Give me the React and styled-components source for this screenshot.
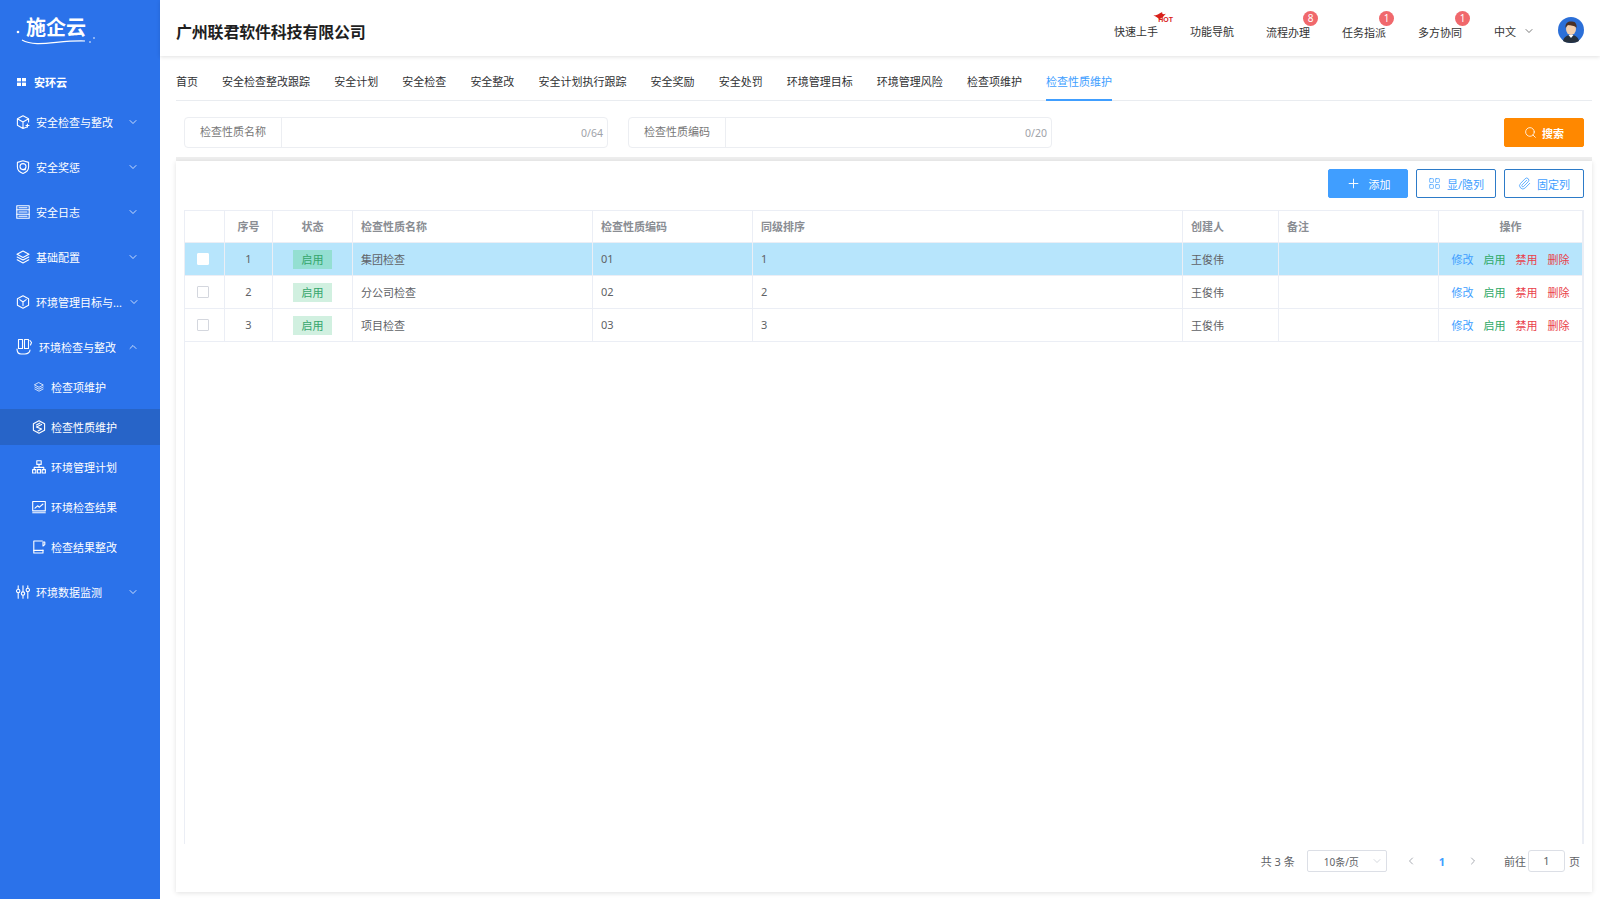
import React from 'react';
import styled, { createGlobalStyle } from 'styled-components';
import { ChevronDown, ChevronUp, ChevronLeft, ChevronRight, Search, Plus, LayoutGrid, Paperclip } from 'lucide-react';

const GlobalStyle = createGlobalStyle`
  * { box-sizing: border-box; }
  html, body { margin: 0; padding: 0; height: 100%; }
  body {
    font-family: "Noto Sans", "Noto Sans CJK SC", sans-serif;
    font-size: 12px;
    color: #606266;
    background: #fff;
    overflow: hidden;
  }
`;

const Page = styled.div`
  display: flex;
  width: 1600px;
  height: 899px;
`;

const Sidebar = styled.aside`
  width: 160px;
  flex-shrink: 0;
  background: #2b72ea;
  color: #fff;
  display: flex;
  flex-direction: column;
`;

const LogoBox = styled.div`
  height: 64px;
  flex-shrink: 0;
  position: relative;
  padding: 14px 0 0 26px;
`;

const LogoText = styled.div`
  font-size: 20px;
  line-height: 25px;
  font-weight: 700;
  font-family: "Noto Sans CJK SC", sans-serif;
`;

const Swoosh = styled.svg`
  position: absolute;
  left: 14px;
  top: 24px;
  width: 84px;
  height: 24px;
`;

const MenuHome = styled.div`
  height: 35px;
  flex-shrink: 0;
  display: flex;
  align-items: center;
  gap: 8px;
  padding-left: 17px;
  font-size: 11px;
  font-weight: 700;
`;

const MenuRow = styled.div`
  height: 45px;
  flex-shrink: 0;
  display: flex;
  align-items: center;
  padding: 0 21px 0 16px;
  gap: 6px;
  font-size: 11px;
  white-space: nowrap;
`;

const MenuArrow = styled.span`
  display: flex;
  margin-left: auto;
`;

const SubMenu = styled.div`
  margin: -2px 0 2px;
`;

const SubRow = styled.div`
  height: ${p => (p.$active ? '36px' : '40px')};
  margin: ${p => (p.$active ? '2px 0' : '0')};
  display: flex;
  align-items: center;
  gap: 5px;
  padding-left: 31px;
  font-size: 11px;
  background: ${p => (p.$active ? '#2764c8' : 'transparent')};
`;

const SubIcon = styled.span`
  width: 15px;
  display: flex;
  justify-content: center;
`;

const Main = styled.div`
  flex: 1;
  min-width: 0;
  display: flex;
  flex-direction: column;
`;

const Header = styled.header`
  height: 56px;
  flex-shrink: 0;
  display: flex;
  align-items: center;
  padding: 6px 16px 0 16px;
  box-shadow: 0 1px 4px rgba(0, 0, 0, 0.12);
  position: relative;
`;

const Company = styled.div`
  font-size: 16px;
  font-weight: 700;
  color: #1f1f1f;
  letter-spacing: -0.2px;
  margin-right: auto;
`;

const NavItem = styled.div`
  width: 76px;
  text-align: center;
  font-size: 11px;
  color: #333;
  position: relative;
  padding-top: ${p => (p.$low ? '2px' : '0')};
`;

const Badge = styled.span`
  position: absolute;
  top: -11px;
  left: 53px;
  width: 15px;
  height: 15px;
  border-radius: 50%;
  background: #f0686c;
  color: #fff;
  font-size: 10px;
  line-height: 15px;
  text-align: center;
`;

const HotMark = styled.span`
  position: absolute;
  top: -10px;
  left: 55px;
  width: 20px;
  height: 10px;
  color: #d8201a;
  font-family: "Liberation Sans", sans-serif;
  font-size: 7px;
  font-weight: 700;
  line-height: 6px;
  display: flex;
  align-items: flex-end;
  justify-content: flex-end;
`;

const Flame = styled.svg`
  position: absolute;
  top: -1px;
  left: 0;
  width: 15px;
  height: 9px;
`;

const Lang = styled.div`
  display: flex;
  align-items: center;
  gap: 7px;
  font-size: 11px;
  color: #333;
  margin: 0 23px 0 16px;
`;

const Avatar = styled.svg`
  width: 26px;
  height: 26px;
  margin-top: -3px;
`;

const Content = styled.div`
  flex: 1;
  min-height: 0;
  display: flex;
  flex-direction: column;
  padding: 0 8px 7px 16px;
`;

const Tabs = styled.div`
  height: 45px;
  flex-shrink: 0;
  display: flex;
  gap: 24.1px;
  border-bottom: 1px solid #e9ecf0;
`;

const Tab = styled.div`
  height: 45px;
  padding-top: 16px;
  line-height: 20px;
  font-size: 11px;
  color: ${p => (p.$active ? '#409eff' : '#303133')};
  border-bottom: ${p => (p.$active ? '2px solid #409eff' : 'none')};
  white-space: nowrap;
`;

const SearchCard = styled.div`
  margin-top: 8px;
  height: 52px;
  flex-shrink: 0;
  display: flex;
  align-items: flex-start;
  padding: 8px 8px 0;
  gap: 20px;
  background: #fff;
  border-bottom: 4px solid #eeeeee;
`;

const Field = styled.div`
  width: 424px;
  height: 31px;
  display: flex;
  align-items: center;
  border: 1px solid #eceef2;
  border-radius: 4px;
`;

const FieldLabel = styled.div`
  width: 97px;
  height: 100%;
  line-height: 28px;
  text-align: center;
  font-size: 11px;
  color: #777;
  border-right: 1px solid #eceef2;
`;

const FieldCount = styled.div`
  margin-left: auto;
  padding-right: 4px;
  font-size: 10.5px;
  color: #a0a3a9;
`;

const Button = styled.button`
  width: 80px;
  height: 29px;
  display: flex;
  align-items: center;
  justify-content: center;
  gap: ${p => p.$gap || 5}px;
  padding: 0;
  border-radius: 2px;
  font: inherit;
  font-size: 11px;
  border: 1px solid ${p => p.$border};
  background: ${p => p.$bg};
  color: ${p => p.$color};
`;

const SearchButton = styled(Button)`
  margin-left: auto;
  margin-top: 1px;
  font-weight: 700;
`;

const TableCard = styled.div`
  flex: 1;
  min-height: 0;
  display: flex;
  flex-direction: column;
  padding: 8px 8px 0;
  background: #fff;
  box-shadow: 0 1px 5px rgba(0, 0, 0, 0.12);
`;

const Toolbar = styled.div`
  display: flex;
  justify-content: flex-end;
  gap: 8px;
  height: 29px;
  flex-shrink: 0;
`;

const TableWrap = styled.div`
  margin-top: 12px;
  height: 634px;
  flex-shrink: 0;
  border-left: 1px solid #ebeef5;
  border-right: 2px solid #ebeef5;
`;

const Grid = styled.div`
  display: grid;
  grid-template-columns: 40px 48px 80px 240px 160px 430px 96px 160px 143px;
  height: 33px;
  border-top: ${p => (p.$head ? '1px solid #ebeef5' : 'none')};
  border-bottom: 1px solid #ebeef5;
  background: ${p => (p.$selected ? '#b7e5fc' : '#fff')};
`;

const Cell = styled.div`
  display: flex;
  align-items: center;
  justify-content: ${p => (p.$center ? 'center' : 'flex-start')};
  padding: 0 ${p => (p.$center ? '0' : '8px')} ${p => (p.$head ? '2px' : '1px')};
  border-right: ${p => (p.$last ? 'none' : '1px solid #ebeef5')};
  font-size: 11px;
  font-weight: ${p => (p.$head ? 700 : 400)};
  color: ${p => (p.$head ? '#8a8d93' : '#606266')};
  white-space: nowrap;
`;

const Check = styled.span`
  width: 12px;
  height: 12px;
  margin: 1px 3px 0 0;
  background: #fff;
  border: 1px solid ${p => (p.$selected ? '#fff' : '#d4d7de')};
  border-radius: 1px;
`;

const Status = styled.span`
  width: 39px;
  height: 19px;
  margin-top: 1px;
  line-height: 19px;
  text-align: center;
  background: ${p => (p.$selected ? '#94dfd2' : '#d1f0e0')};
  color: #35a66c;
  font-size: 11px;
`;

const Actions = styled.div`
  display: flex;
  gap: 10px;
`;

const Action = styled.span`
  color: ${p => p.$color};
  font-size: 11px;
`;

const Pager = styled.div`
  flex: 1;
  display: flex;
  align-items: center;
  justify-content: flex-end;
  padding: 0 4px 14px 0;
  font-size: 11px;
  color: #606266;
`;

const PageSize = styled.div`
  width: 80px;
  height: 22px;
  margin-left: 12px;
  display: flex;
  align-items: center;
  justify-content: space-between;
  padding: 0 3px 0 16px;
  font-size: 10px;
  border: 1px solid #dcdfe6;
  border-radius: 2px;
`;

const PageArrow = styled.span`
  display: flex;
  color: #a8abb2;
  margin: ${p => p.$margin};
`;

const PageNum = styled.span`
  color: #409eff;
  font-weight: 700;
`;

const JumpInput = styled.span`
  width: 37px;
  height: 22px;
  margin: 0 4px 0 2px;
  line-height: 20px;
  text-align: center;
  border: 1px solid #dcdfe6;
  border-radius: 3px;
`;

const chev = { size: 12, strokeWidth: 1.5 };

function Ico({ w = 14, h = 14, vb = '0 0 14 14', children }) {
  return (
    <svg width={w} height={h} viewBox={vb} fill="none" stroke="#fff" strokeWidth="1.1" strokeLinejoin="round" strokeLinecap="round" style={{ flexShrink: 0 }}>
      {children}
    </svg>
  );
}

const HomeIcon = () => (
  <svg width="9" height="8" viewBox="0 0 9 8" fill="#fff" style={{ flexShrink: 0 }}>
    <rect x="0" y="0" width="4" height="3.4" />
    <rect x="5" y="0" width="4" height="3.4" />
    <rect x="0" y="4.6" width="4" height="3.4" />
    <rect x="5" y="4.6" width="4" height="3.4" />
  </svg>
);

const CubePlus = () => (
  <Ico><path d="M7 .8 12.6 3.8V7M11 12 7 13.4 1.4 10.2V3.8L7 .8M1.4 3.8 7 7l5.6-3.2M7 7v6.4" /><path d="M11.4 9v3M10 10.5h3" /></Ico>
);

const ShieldQ = () => (
  <Ico><path d="M7 .7 12.6 2.4V7C12.6 10.4 10 12.4 7 13.4 4 12.4 1.4 10.4 1.4 7V2.4Z" /><circle cx="7" cy="6.6" r="3" /><path d="M7 9.6h2.4" /></Ico>
);

const TableIcon = () => (
  <Ico><rect x=".8" y=".8" width="12.4" height="12.4" /><path d="M.8 4.8h12.4M.8 9.2h12.4M3 2.8h8M3 7h8M3 11.2h8" /></Ico>
);

const LayersIcon = ({ s = 14 }) => (
  <Ico w={s} h={s}><path d="M7 1 13 4.2 7 7.4 1 4.2Z" /><path d="M1.2 7 7 10.1 12.8 7" /><path d="M1.2 9.8 7 12.9 12.8 9.8" /></Ico>
);

const CubeY = () => (
  <Ico><path d="M7 .7 12.6 3.8V10.2L7 13.3 1.4 10.2V3.8Z" /><path d="M3.8 4.6 7 7l3.2-2.4M7 7v3.6" /></Ico>
);

const HexS = () => (
  <Ico><path d="M7 .7 12.6 3.8V10.2L7 13.3 1.4 10.2V3.8Z" /><path d="M9.6 4.4 4.4 7 9.6 9 6 11M8 3 4.4 5" /></Ico>
);

const Books = () => (
  <Ico w={17} h={18} vb="0 0 17 18"><path d="M2.5 1.5h4v9h-4zM8.5 1.5h4v9h-4z" /><path d="M1 11c0 3 1.5 5 4 5h4c3 0 5-2 5-4" /><path d="M14 2.5l1.5 2-1 2.5" /></Ico>
);

const Sitemap = () => (
  <Ico><rect x="4.8" y=".8" width="4.4" height="3.6" /><path d="M7 4.4v3M2.2 9.6V7.4h9.6v2.2" /><rect x=".6" y="9.6" width="3.2" height="3.4" /><rect x="5.4" y="9.6" width="3.2" height="3.4" /><rect x="10.2" y="9.6" width="3.2" height="3.4" /></Ico>
);

const MonitorChart = () => (
  <Ico><rect x=".7" y="1.5" width="12.6" height="9.4" /><path d="M.7 12.8h12.6M3 8.2l2.6-2.4 1.8 1.4L11 4" /></Ico>
);

const Notebook = () => (
  <Ico><path d="M10.4 1H1.8v12h9.2V10" /><path d="M1.8 10.4h9.2M11 2v4l1.8-1.4V2Z" /></Ico>
);

const Sliders = () => (
  <Ico><path d="M2.2 .8v3.4M2.2 8v5.2M7 .8v6M7 10.4v2.8M11.8 .8v2.4M11.8 7v6.2" /><circle cx="2.2" cy="6" r="1.7" /><circle cx="7" cy="8.6" r="1.7" /><circle cx="11.8" cy="5" r="1.7" /></Ico>
);

const tabs = ['首页', '安全检查整改跟踪', '安全计划', '安全检查', '安全整改', '安全计划执行跟踪', '安全奖励', '安全处罚', '环境管理目标', '环境管理风险', '检查项维护', '检查性质维护'];

const rows = [
  { no: 1, name: '集团检查', code: '01', selected: true },
  { no: 2, name: '分公司检查', code: '02' },
  { no: 3, name: '项目检查', code: '03' },
];

function Logo() {
  return (
    <LogoBox>
      <LogoText>施企云</LogoText>
      <Swoosh viewBox="0 0 84 24" fill="none">
        <circle cx="4" cy="8" r="1.3" fill="#fff" />
        <path d="M8 16 C 22 24, 44 16, 71 17" stroke="#fff" strokeWidth="1.2" />
        <circle cx="76" cy="18" r="0.8" fill="#fff" />
        <circle cx="80" cy="14" r="0.8" fill="#fff" />
      </Swoosh>
    </LogoBox>
  );
}

function Menu() {
  return (
    <>
      <MenuHome><HomeIcon />安环云</MenuHome>
      <MenuRow><CubePlus />安全检查与整改<MenuArrow><ChevronDown {...chev} /></MenuArrow></MenuRow>
      <MenuRow><ShieldQ />安全奖惩<MenuArrow><ChevronDown {...chev} /></MenuArrow></MenuRow>
      <MenuRow><TableIcon />安全日志<MenuArrow><ChevronDown {...chev} /></MenuArrow></MenuRow>
      <MenuRow><LayersIcon />基础配置<MenuArrow><ChevronDown {...chev} /></MenuArrow></MenuRow>
      <MenuRow><CubeY />环境管理目标与...<MenuArrow><ChevronDown {...chev} /></MenuArrow></MenuRow>
      <MenuRow><Books />环境检查与整改<MenuArrow><ChevronUp {...chev} /></MenuArrow></MenuRow>
      <SubMenu>
        <SubRow><SubIcon><LayersIcon s={10} /></SubIcon>检查项维护</SubRow>
        <SubRow $active><SubIcon><HexS /></SubIcon>检查性质维护</SubRow>
        <SubRow><SubIcon><Sitemap /></SubIcon>环境管理计划</SubRow>
        <SubRow><SubIcon><MonitorChart /></SubIcon>环境检查结果</SubRow>
        <SubRow><SubIcon><Notebook /></SubIcon>检查结果整改</SubRow>
      </SubMenu>
      <MenuRow><Sliders />环境数据监测<MenuArrow><ChevronDown {...chev} /></MenuArrow></MenuRow>
    </>
  );
}

function TopBar() {
  return (
    <Header>
      <Company>广州联君软件科技有限公司</Company>
      <NavItem>快速上手
        <HotMark>
          <Flame viewBox="0 0 16 10"><path d="M0 4 C4 4 6 2 10 0 C9 2 11 3 14 2 C12 4 11 6 7 8 C5 7 3 5 0 4Z" fill="#d8201a" /></Flame>
          HOT
        </HotMark>
      </NavItem>
      <NavItem>功能导航</NavItem>
      <NavItem $low>流程办理<Badge>8</Badge></NavItem>
      <NavItem $low>任务指派<Badge>1</Badge></NavItem>
      <NavItem $low>多方协同<Badge>1</Badge></NavItem>
      <Lang>中文<ChevronDown size={12} strokeWidth={1.3} /></Lang>
      <Avatar viewBox="0 0 26 26">
        <circle cx="13" cy="13" r="13" fill="#2b6fd8" />
        <path d="M5 24 C6 19 10 18 13 18 C16 18 20 19 21 24 C18 26.5 8 26.5 5 24Z" fill="#26313f" />
        <path d="M10.5 18 L13 21 L15.5 18 Z" fill="#fff" />
        <ellipse cx="13" cy="12" rx="5" ry="6" fill="#f3cfae" />
        <path d="M7.5 11 C7 5 11 4 14 4.5 C18 4.5 19 8 18.5 11 C17 8 12 9 10 8 C9 9 8 10 7.5 11Z" fill="#4a3026" />
      </Avatar>
    </Header>
  );
}

function DataTable() {
  return (
    <TableWrap>
      <Grid $head>
        <Cell />
        <Cell $center $head>序号</Cell>
        <Cell $center $head>状态</Cell>
        <Cell $head>检查性质名称</Cell>
        <Cell $head>检查性质编码</Cell>
        <Cell $head>同级排序</Cell>
        <Cell $head>创建人</Cell>
        <Cell $head>备注</Cell>
        <Cell $center $head $last>操作</Cell>
      </Grid>
      {rows.map(r => (
        <Grid key={r.no} $selected={r.selected}>
          <Cell $center><Check $selected={r.selected} /></Cell>
          <Cell $center>{r.no}</Cell>
          <Cell $center><Status $selected={r.selected}>启用</Status></Cell>
          <Cell>{r.name}</Cell>
          <Cell>{r.code}</Cell>
          <Cell>{r.no}</Cell>
          <Cell>王俊伟</Cell>
          <Cell />
          <Cell $center $last>
            <Actions>
              <Action $color="#409eff">修改</Action>
              <Action $color="#2fa968">启用</Action>
              <Action $color="#e9404a">禁用</Action>
              <Action $color="#e9404a">删除</Action>
            </Actions>
          </Cell>
        </Grid>
      ))}
    </TableWrap>
  );
}

export default function App() {
  return (
    <Page>
      <GlobalStyle />
      <Sidebar>
        <Logo />
        <Menu />
      </Sidebar>
      <Main>
        <TopBar />
        <Content>
          <Tabs>
            {tabs.map((t, i) => <Tab key={t} $active={i === tabs.length - 1}>{t}</Tab>)}
          </Tabs>
          <SearchCard>
            <Field><FieldLabel>检查性质名称</FieldLabel><FieldCount>0/64</FieldCount></Field>
            <Field><FieldLabel>检查性质编码</FieldLabel><FieldCount>0/20</FieldCount></Field>
            <SearchButton $bg="#ff8800" $border="#ff8800" $color="#fff"><Search size={13} strokeWidth={1.5} />搜索</SearchButton>
          </SearchCard>
          <TableCard>
            <Toolbar>
              <Button $bg="#409eff" $border="#409eff" $color="#fff" $gap={8}><Plus size={15} strokeWidth={1.5} />添加</Button>
              <Button $bg="#fff" $border="#2d7bc8" $color="#409eff" $gap={6}><LayoutGrid size={13} strokeWidth={1.3} />显/隐列</Button>
              <Button $bg="#fff" $border="#2d7bc8" $color="#409eff" $gap={6}><Paperclip size={13} strokeWidth={1.5} />固定列</Button>
            </Toolbar>
            <DataTable />
            <Pager>
              共 3 条
              <PageSize>10条/页<ChevronDown size={12} strokeWidth={1.3} color="#c0c4cc" /></PageSize>
              <PageArrow $margin="0 22px 0 18px"><ChevronLeft size={12} /></PageArrow>
              <PageNum>1</PageNum>
              <PageArrow $margin="0 25px 0 22px"><ChevronRight size={12} /></PageArrow>
              前往
              <JumpInput>1</JumpInput>
              页
            </Pager>
          </TableCard>
        </Content>
      </Main>
    </Page>
  );
}
